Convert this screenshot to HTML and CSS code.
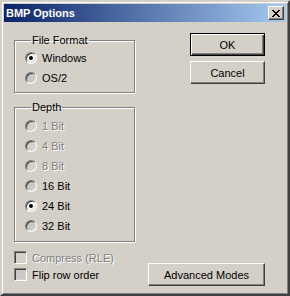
FILE: index.html
```html
<!DOCTYPE html>
<html lang="en">

<head>
    <meta charset="UTF-8">
    <title>BMP Options</title>
    <link rel="stylesheet" href="styles.css">
</head>

<body>
    <div class="window">
        <div class="titlebar">
            <span class="title">BMP Options</span>
            <span class="close">
                <svg width="8" height="7" viewBox="0 0 8 7" shape-rendering="crispEdges">
                    <path d="M0 0h2v1h-2z M6 0h2v1h-2z M1 1h2v1h-2z M5 1h2v1h-2z M2 2h4v1h-4z M3 3h2v1h-2z M2 4h4v1h-4z M1 5h2v1h-2z M5 5h2v1h-2z M0 6h2v1h-2z M6 6h2v1h-2z" fill="#000" />
                </svg>
            </span>
        </div>

        <div class="content">
            <div class="left">
                <!-- File Format -->
                <fieldset class="group format">
                    <legend>File Format</legend>
                    <div class="opt"><span class="radio checked"></span>Windows</div>
                    <div class="opt"><span class="radio"></span>OS/2</div>
                </fieldset>

                <!-- Depth -->
                <fieldset class="group depth">
                    <legend>Depth</legend>
                    <div class="opt disabled"><span class="radio"></span>1 Bit</div>
                    <div class="opt disabled"><span class="radio"></span>4 Bit</div>
                    <div class="opt disabled"><span class="radio"></span>8 Bit</div>
                    <div class="opt"><span class="radio"></span>16 Bit</div>
                    <div class="opt"><span class="radio checked"></span>24 Bit</div>
                    <div class="opt"><span class="radio"></span>32 Bit</div>
                </fieldset>

                <div class="checks">
                    <div class="check disabled"><span class="box"></span>Compress (RLE)</div>
                    <div class="check"><span class="box"></span>Flip row order</div>
                </div>
            </div>

            <div class="right">
                <button class="btn default">OK</button>
                <button class="btn">Cancel</button>
                <button class="btn wide">Advanced Modes</button>
            </div>
        </div>
    </div>
</body>

</html>
```

FILE: styles.css
```css
body {
    margin: 0;
    padding: 0;
    font-family: 'Liberation Sans', Arial, sans-serif;
    font-size: 11px;
    color: #000;
    background-color: #d4d0c8;
}

.window {
    width: 290px;
    height: 296px;
    box-sizing: border-box;
    padding: 2px;
    background-color: #d4d0c8;
    border: 2px solid;
    border-color: #d4d0c8 #404040 #404040 #d4d0c8;
    box-shadow: inset 1px 1px #fff, inset -1px -1px #808080;
    display: flex;
    flex-direction: column;
}

.titlebar {
    height: 18px;
    display: flex;
    align-items: center;
    justify-content: space-between;
    padding: 0 2px;
    background: linear-gradient(to right, #0a246a, #a6caf0);
}

.title {
    color: #fff;
    font-weight: bold;
    font-size: 11px;
    line-height: 13px;
}

.close {
    width: 16px;
    height: 14px;
    box-sizing: border-box;
    display: flex;
    align-items: center;
    justify-content: center;
    background-color: #d4d0c8;
    border: 1px solid;
    border-color: #fff #404040 #404040 #fff;
    box-shadow: inset -1px -1px #808080;
}

.content {
    flex: 1;
    display: flex;
    justify-content: space-between;
    padding: 12px 21px 6px 10px;
}

.left {
    width: 121px;
}

/* Group boxes */
.group {
    margin: 0;
    padding: 0 0 4px 10px;
    min-width: 0;
    border: 1px solid #808080;
    box-shadow: inset 1px 1px #fff, 1px 1px #fff;
}

.group legend {
    padding: 0 1px;
    margin-left: 6px;
    line-height: 13px;
}

.format .opt:first-of-type {
    margin-top: 1px;
}

.depth {
    margin-top: 8px;
    padding-top: 2px;
    padding-bottom: 5px;
}

.opt {
    height: 20px;
    display: flex;
    align-items: center;
}

.radio {
    position: relative;
    width: 12px;
    height: 12px;
    box-sizing: border-box;
    margin-right: 5px;
    border-radius: 50%;
    border: 1px solid;
    border-color: #808080 #fff #fff #808080;
    background-color: #c8c8c8;
    box-shadow: inset 1px 1px #404040, inset -1px -1px #d4d0c8;
}

.radio.checked {
    background-color: #fff;
}

.radio.checked::after {
    content: "";
    position: absolute;
    left: 3px;
    top: 3px;
    width: 4px;
    height: 4px;
    border-radius: 50%;
    background-color: #000;
}

.disabled {
    color: #808080;
    text-shadow: 1px 1px #fff;
}

.disabled .radio,
.disabled .box {
    background-color: #d4d0c8;
}

/* Check boxes */
.checks {
    margin-top: 7px;
}

.check {
    height: 17px;
    display: flex;
    align-items: center;
}

.box {
    width: 13px;
    height: 13px;
    box-sizing: border-box;
    margin-right: 5px;
    border: 1px solid;
    border-color: #808080 #fff #fff #808080;
    background-color: #c8c8c8;
    box-shadow: inset 1px 1px #404040, inset -1px -1px #d4d0c8;
}

/* Buttons */
.right {
    display: flex;
    flex-direction: column;
    align-items: flex-end;
    margin-top: -1px;
}

.btn {
    width: 75px;
    height: 23px;
    padding: 0;
    font-family: inherit;
    font-size: 11px;
    color: #000;
    background-color: #d4d0c8;
    border: 1px solid;
    border-color: #fff #404040 #404040 #fff;
    box-shadow: inset -1px -1px #808080;
    border-radius: 0;
}

.btn.default {
    border-color: #000;
    box-shadow: inset 1px 1px #fff, inset -1px -1px #404040, inset -2px -2px #808080;
}

.btn + .btn {
    margin-top: 5px;
}

.btn.wide {
    width: 117px;
    margin-top: auto;
}
```
